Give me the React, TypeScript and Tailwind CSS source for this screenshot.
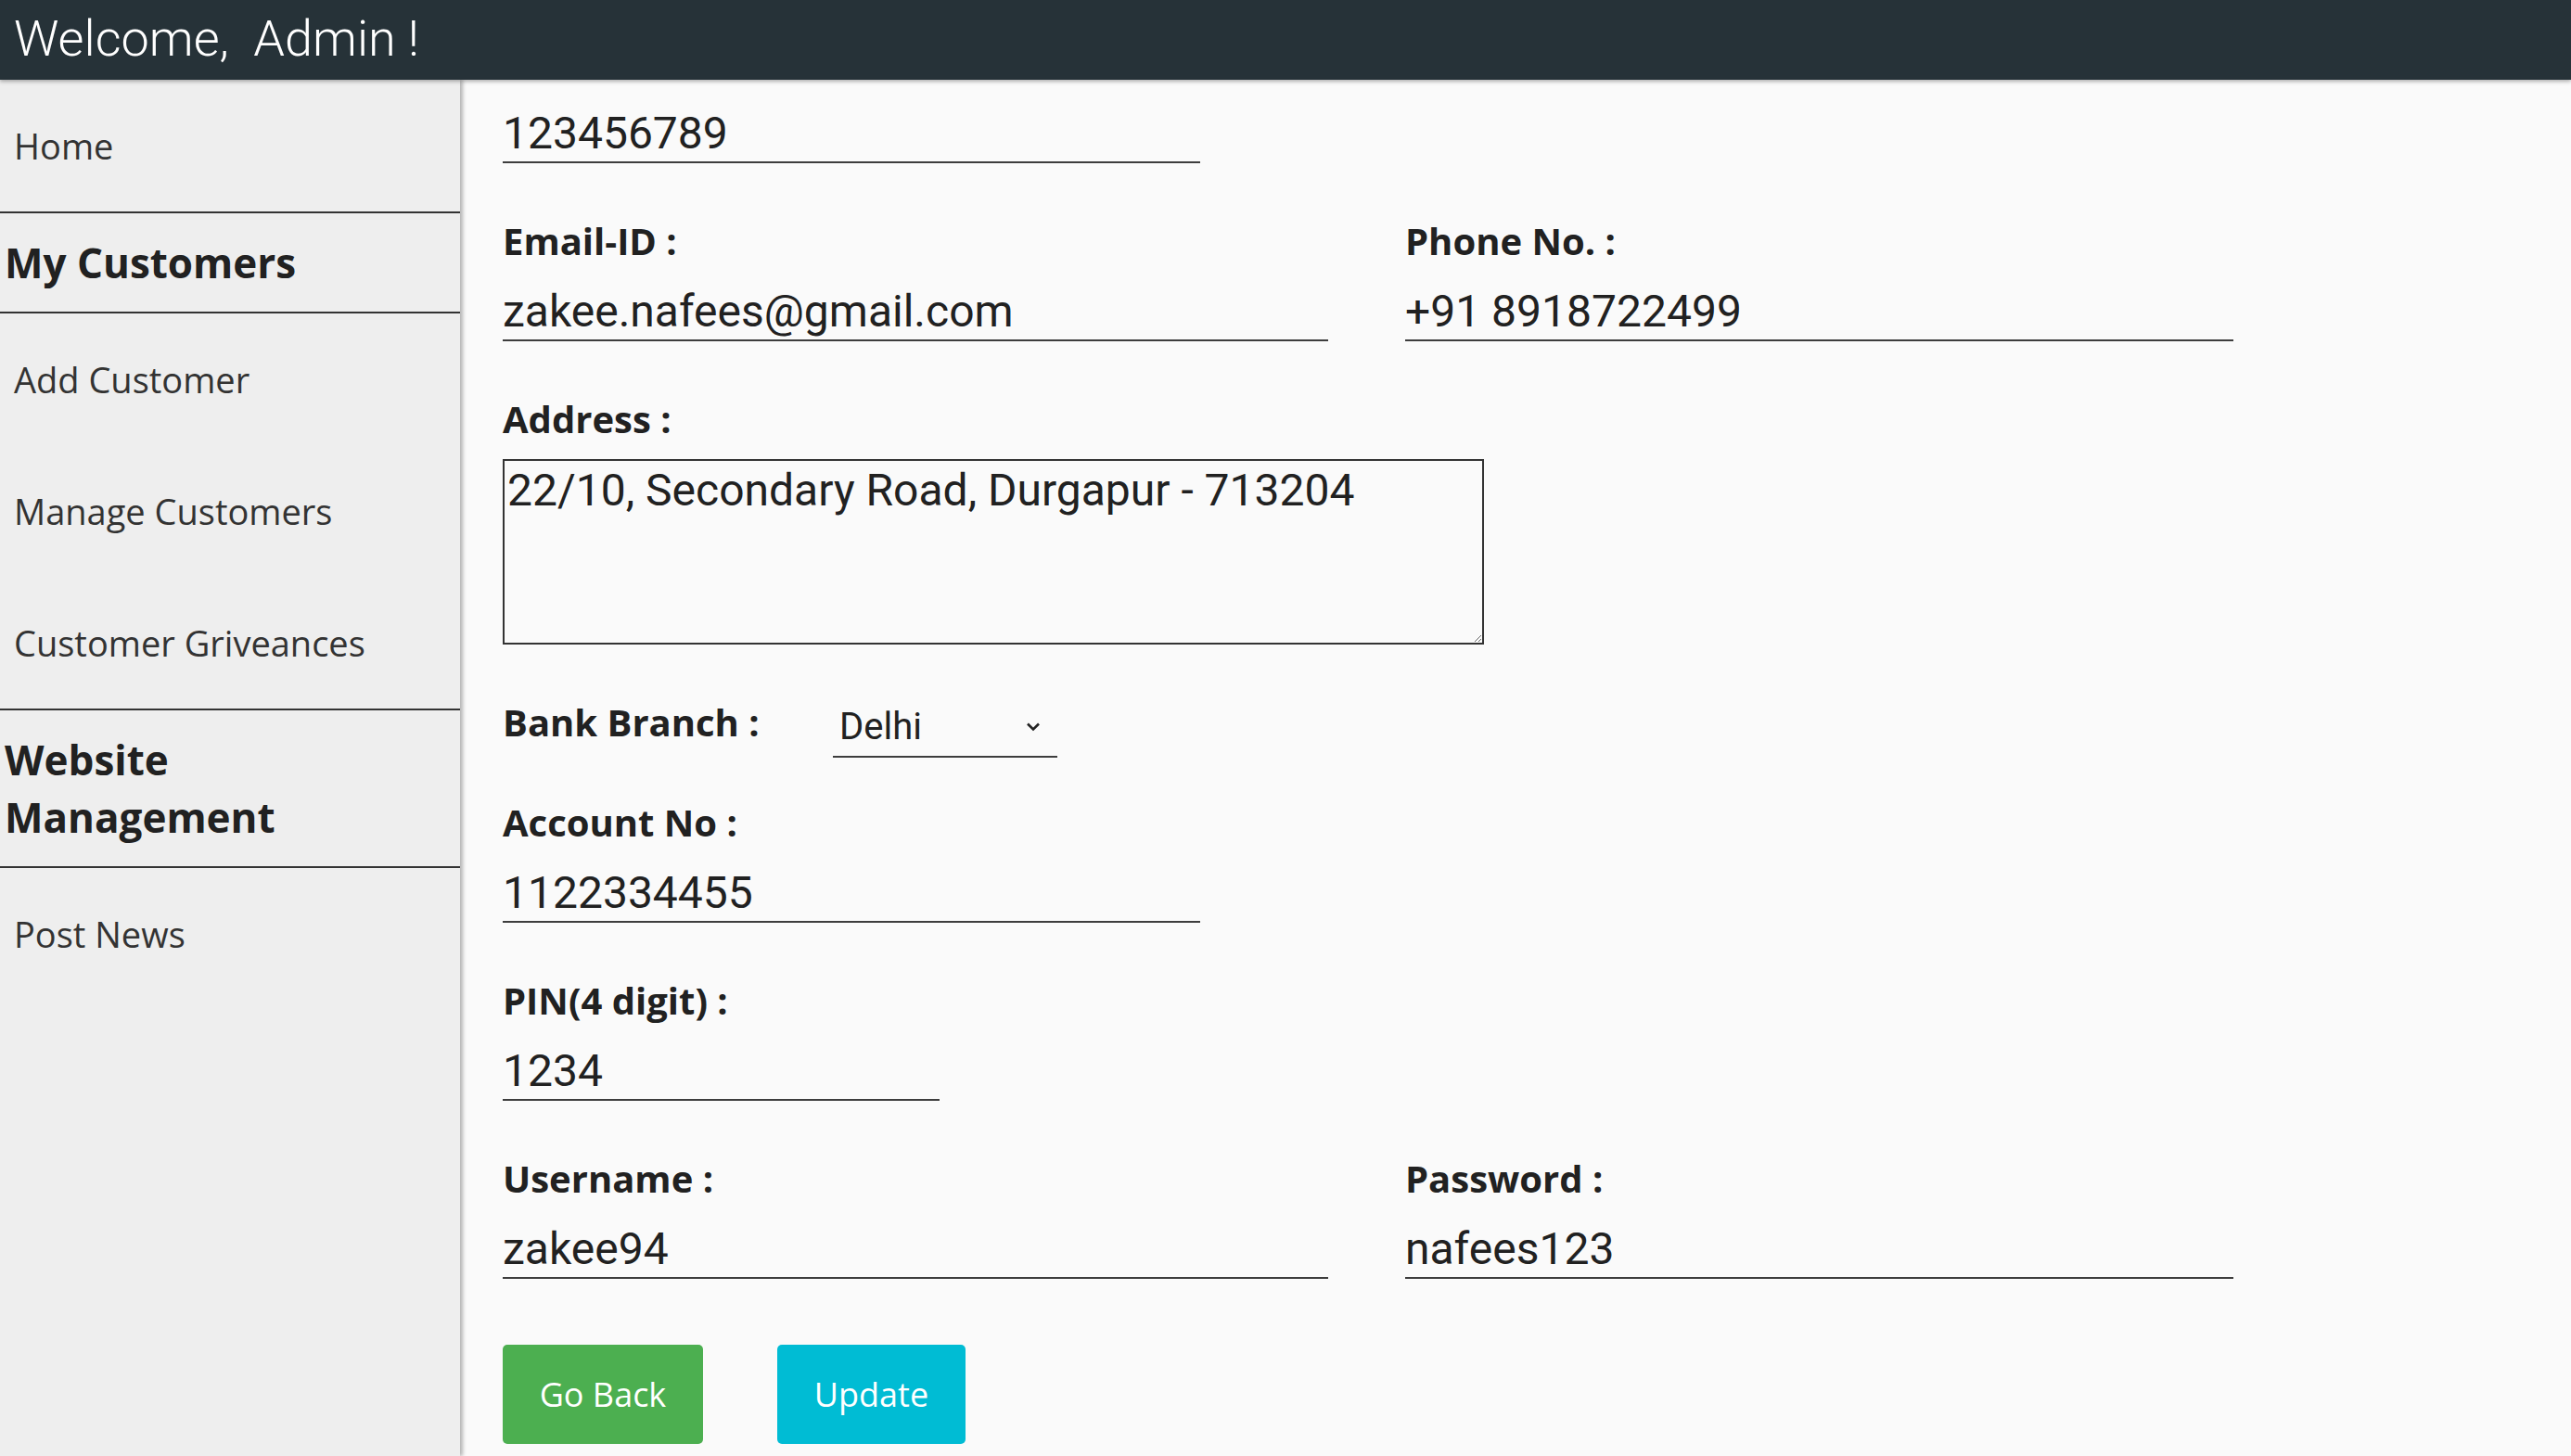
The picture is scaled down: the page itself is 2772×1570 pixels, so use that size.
import React from 'react';

const LABEL = "h-[52px] leading-[52px] text-[40px] font-bold text-[#212121] font-['Open_Sans',sans-serif] whitespace-nowrap";
const INPUT =
  "block h-[82px] pt-[19px] pb-0 px-0 bg-transparent border-0 border-b-2 border-[#3d3d3d] outline-none font-['Roboto',sans-serif] text-[48px] text-[#212121]";

function Label({ children }: { children: React.ReactNode }) {
  return <div className={LABEL}>{children}</div>;
}

function Field({ label, value, width }: { label?: string; value: string; width: string }) {
  return (
    <div className="mb-[58px]">
      {label && <Label>{label}</Label>}
      <input readOnly value={value} className={`${INPUT} ${width}`} />
    </div>
  );
}

function NavLink({ children }: { children: React.ReactNode }) {
  return (
    <div className="h-[142px] flex items-center pl-[15px] text-[38px] text-[#333] font-['Open_Sans',sans-serif]">
      {children}
    </div>
  );
}

function NavHeading({ children, className = '' }: { children: React.ReactNode; className?: string }) {
  return (
    <div
      className={`flex items-center pl-[5px] text-[44px] leading-[62px] font-bold text-[#212121] font-['Open_Sans',sans-serif] ${className}`}
    >
      {children}
    </div>
  );
}

const Divider = () => <div className="h-[2px] bg-[#333]" />;

export default function App() {
  return (
    <div className="h-[1570px] flex flex-col overflow-hidden bg-[#fafafa]">
      {/* Top bar */}
      <header className="relative z-20 h-[86px] shrink-0 flex items-center pb-[4px] pl-[15px] bg-[#263238] shadow-[0_2px_4px_rgba(0,0,0,0.3)]">
        <h1 className="text-[54px] font-light text-white font-['Roboto',sans-serif] whitespace-pre">
          Welcome,  Admin !
        </h1>
      </header>

      <div className="flex flex-1 min-h-0">
        {/* Sidebar */}
        <aside className="relative z-10 w-[496px] shrink-0 bg-[#eeeeee] shadow-[3px_0_4px_rgba(0,0,0,0.28)]">
          <NavLink>Home</NavLink>
          <Divider />
          <NavHeading className="h-[106px]">My Customers</NavHeading>
          <Divider />
          <NavLink>Add Customer</NavLink>
          <NavLink>Manage Customers</NavLink>
          <NavLink>Customer Griveances</NavLink>
          <Divider />
          <NavHeading className="h-[168px]">
            <span>
              Website
              <br />
              Management
            </span>
          </NavHeading>
          <Divider />
          <NavLink>Post News</NavLink>
        </aside>

        {/* Edit form */}
        <main className="flex-1 pl-[46px] pt-[8px]">
          <Field value="123456789" width="w-[752px]" />

          <div className="grid grid-cols-[890px_893px] gap-x-[83px]">
            <Field label="Email-ID :" value="zakee.nafees@gmail.com" width="w-full" />
            <Field label="Phone No. :" value="+91 8918722499" width="w-full" />
          </div>

          <Label>Address :</Label>
          <textarea
            readOnly
            defaultValue="22/10, Secondary Road, Durgapur - 713204"
            className="block mt-[17px] mb-[58px] w-[1058px] h-[200px] border-2 border-[#333] p-[4px] pl-[3px] bg-transparent outline-none font-['Roboto',sans-serif] text-[48px] leading-[55px] text-[#212121]"
          />

          <div className="flex items-start mb-[44px]">
            <div className={`w-[356px] ${LABEL}`}>Bank Branch :</div>
            <div className="relative w-[242px] h-[64px] border-b-2 border-[#3d3d3d]">
              <select className="appearance-none w-full h-full pl-[7px] bg-transparent outline-none font-['Roboto',sans-serif] text-[40px] text-[#212121]">
                <option>Delhi</option>
                <option>Mumbai</option>
                <option>Kolkata</option>
              </select>
              <svg
                className="absolute left-[208px] top-[25px] w-[16px] h-[11px] pointer-events-none"
                viewBox="0 0 16 11"
                fill="none"
                stroke="#222"
                strokeWidth="2.6"
              >
                <path d="M2 2.5l6 6 6-6" />
              </svg>
            </div>
          </div>

          <Field label="Account No :" value="1122334455" width="w-[752px]" />
          <Field label="PIN(4 digit) :" value="1234" width="w-[471px]" />

          <div className="grid grid-cols-[890px_893px] gap-x-[83px]">
            <Field label="Username :" value="zakee94" width="w-full" />
            <Field label="Password :" value="nafees123" width="w-full" />
          </div>

          <div className="flex gap-[80px] mt-[13px]">
            <button className="h-[107px] w-[216px] rounded-[5px] bg-[#4caf50] text-white text-[36px] font-['Open_Sans',sans-serif]">
              Go Back
            </button>
            <button className="h-[107px] w-[203px] rounded-[5px] bg-[#00bcd4] text-white text-[36px] font-['Open_Sans',sans-serif]">
              Update
            </button>
          </div>
        </main>
      </div>
    </div>
  );
}
